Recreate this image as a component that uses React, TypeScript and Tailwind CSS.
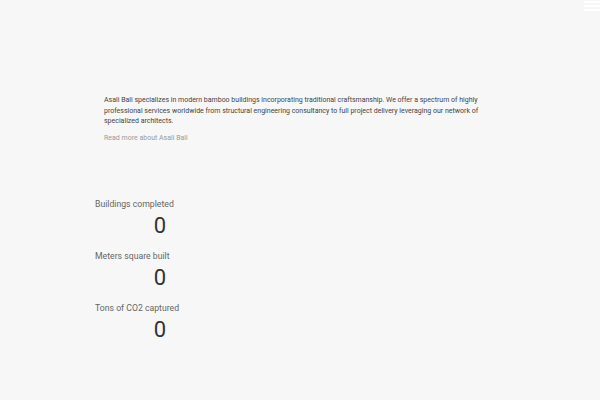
export default function App() {
  const stats = [
    { label: "Buildings completed", value: 0 },
    { label: "Meters square built", value: 0 },
    { label: "Tons of CO2 captured", value: 0 },
  ];

  return (
    <div
      className="relative w-[600px] h-[400px] bg-[#f7f7f7] overflow-hidden"
      style={{ fontFamily: "Roboto, sans-serif" }}
    >
      {/* menu toggle */}
      <div className="absolute top-[1px] right-0 flex flex-col gap-[2px] w-[16px]">
        <span className="block h-[2px] bg-white" />
        <span className="block h-[2px] bg-white" />
        <span className="block h-[2px] bg-white" />
      </div>

      {/* About */}
      <section className="pt-[95px] pl-[104px] w-[480px]">
        <p className="text-[7px] leading-[10.5px] text-[#444]">
          Asali Bali specializes in modern bamboo buildings incorporating traditional craftsmanship. We offer a
          spectrum of highly professional services worldwide from structural engineering consultancy to full
          project delivery leveraging our network of specialized architects.
        </p>
        <a className="block mt-[6px] text-[7px] leading-[10px] text-[#999]">Read more about Asali Bali</a>
      </section>

      {/* Stats */}
      <section className="mt-[55px] ml-[95px] w-[130px] flex flex-col gap-[9px]">
        {stats.map((s) => (
          <div key={s.label} className="flex flex-col">
            <span className="text-[8.7px] leading-[13px] text-[#666]">{s.label}</span>
            <span className="text-center text-[22px] leading-[30px] text-[#333]">{s.value}</span>
          </div>
        ))}
      </section>
    </div>
  );
}
